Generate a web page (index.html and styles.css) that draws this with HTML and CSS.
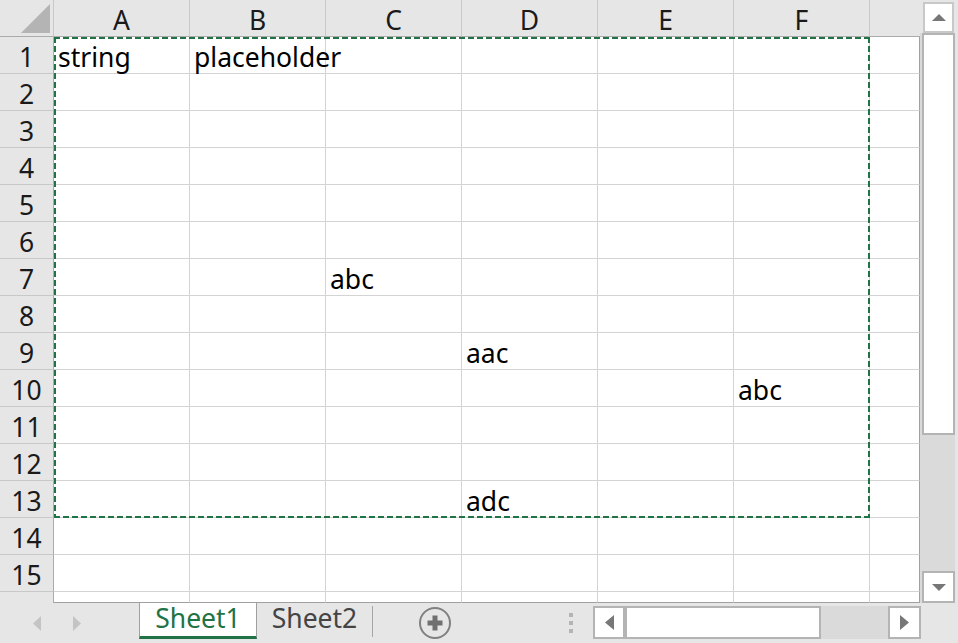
FILE: index.html
```html
<!DOCTYPE html>
<html>
<head>
<meta charset="utf-8">
<link rel="stylesheet" href="styles.css">
</head>
<body>
<div class="app">
  <div class="main">
    <div class="sheet">
      <div class="grid">
        <div class="c corner"><svg class="corner-tri" width="53" height="36" viewBox="0 0 53 36"><polygon points="21,33 50,33 50,4" fill="#b4b4b4"/></svg></div>
        <div class="c ch">A</div><div class="c ch">B</div><div class="c ch">C</div><div class="c ch">D</div><div class="c ch">E</div><div class="c ch">F</div><div class="c ch gh"></div>

        <div class="c rh">1</div><div class="c">string</div><div class="c">placeholder</div><div class="c"></div><div class="c"></div><div class="c"></div><div class="c"></div><div class="c g"></div>
        <div class="c rh">2</div><div class="c"></div><div class="c"></div><div class="c"></div><div class="c"></div><div class="c"></div><div class="c"></div><div class="c g"></div>
        <div class="c rh">3</div><div class="c"></div><div class="c"></div><div class="c"></div><div class="c"></div><div class="c"></div><div class="c"></div><div class="c g"></div>
        <div class="c rh">4</div><div class="c"></div><div class="c"></div><div class="c"></div><div class="c"></div><div class="c"></div><div class="c"></div><div class="c g"></div>
        <div class="c rh">5</div><div class="c"></div><div class="c"></div><div class="c"></div><div class="c"></div><div class="c"></div><div class="c"></div><div class="c g"></div>
        <div class="c rh">6</div><div class="c"></div><div class="c"></div><div class="c"></div><div class="c"></div><div class="c"></div><div class="c"></div><div class="c g"></div>
        <div class="c rh">7</div><div class="c"></div><div class="c"></div><div class="c">abc</div><div class="c"></div><div class="c"></div><div class="c"></div><div class="c g"></div>
        <div class="c rh">8</div><div class="c"></div><div class="c"></div><div class="c"></div><div class="c"></div><div class="c"></div><div class="c"></div><div class="c g"></div>
        <div class="c rh">9</div><div class="c"></div><div class="c"></div><div class="c"></div><div class="c">aac</div><div class="c"></div><div class="c"></div><div class="c g"></div>
        <div class="c rh">10</div><div class="c"></div><div class="c"></div><div class="c"></div><div class="c"></div><div class="c"></div><div class="c">abc</div><div class="c g"></div>
        <div class="c rh">11</div><div class="c"></div><div class="c"></div><div class="c"></div><div class="c"></div><div class="c"></div><div class="c"></div><div class="c g"></div>
        <div class="c rh">12</div><div class="c"></div><div class="c"></div><div class="c"></div><div class="c"></div><div class="c"></div><div class="c"></div><div class="c g"></div>
        <div class="c rh">13</div><div class="c"></div><div class="c"></div><div class="c"></div><div class="c">adc</div><div class="c"></div><div class="c"></div><div class="c g"></div>
        <div class="c rh">14</div><div class="c"></div><div class="c"></div><div class="c"></div><div class="c"></div><div class="c"></div><div class="c"></div><div class="c g"></div>
        <div class="c rh">15</div><div class="c"></div><div class="c"></div><div class="c"></div><div class="c"></div><div class="c"></div><div class="c"></div><div class="c g"></div>
        <div class="c rh last"></div><div class="c last"></div><div class="c last"></div><div class="c last"></div><div class="c last"></div><div class="c last"></div><div class="c last"></div><div class="c g last"></div>
      </div>
      <svg class="selection" width="920" height="603" viewBox="0 0 920 603">
        <g stroke="#217346" stroke-width="2" stroke-dasharray="6 3" fill="none">
          <line x1="54" y1="38" x2="870" y2="38"/>
          <line x1="54" y1="517" x2="870" y2="517"/>
          <line x1="55" y1="37" x2="55" y2="518"/>
          <line x1="869" y1="37" x2="869" y2="518"/>
        </g>
      </svg>
    </div>
    <div class="vscroll">
      <div class="vup"><svg width="14" height="7" viewBox="0 0 14 7"><polygon points="0,7 7,0 14,7" fill="#777"/></svg></div>
      <div class="vtrack">
        <div class="vthumb"></div>
        <div class="vdown"><svg width="14" height="7" viewBox="0 0 14 7"><polygon points="0,0 14,0 7,7" fill="#777"/></svg></div>
      </div>
    </div>
  </div>
  <div class="tabbar">
    <div class="nav">
      <svg width="8" height="15" viewBox="0 0 8 15"><polygon points="8,0 8,15 0,7.5" fill="#c4c4c4"/></svg>
      <svg width="8" height="15" viewBox="0 0 8 15"><polygon points="0,0 8,7.5 0,15" fill="#c4c4c4"/></svg>
    </div>
    <div class="tab active">Sheet1</div>
    <div class="tab">Sheet2</div>
    <div class="tsep"></div>
    <svg class="add" width="34" height="34" viewBox="0 0 34 34">
      <circle cx="17" cy="17" r="15" fill="none" stroke="#808080" stroke-width="2"/>
      <rect x="9.5" y="14.5" width="15" height="5" fill="#707070"/>
      <rect x="14.5" y="9.5" width="5" height="15" fill="#707070"/>
    </svg>
    <svg class="dots" width="4" height="20" viewBox="0 0 4 20">
      <rect x="0" y="0" width="4" height="4" fill="#b4b4b4"/>
      <rect x="0" y="8" width="4" height="4" fill="#b4b4b4"/>
      <rect x="0" y="16" width="4" height="4" fill="#b4b4b4"/>
    </svg>
    <div class="hscroll">
      <div class="hbtn hleft"><svg width="9" height="15" viewBox="0 0 9 15"><polygon points="9,0 9,15 0,7.5" fill="#777"/></svg></div>
      <div class="hthumb"></div>
      <div class="htrack"></div>
      <div class="hbtn hright"><svg width="9" height="15" viewBox="0 0 9 15"><polygon points="0,0 9,7.5 0,15" fill="#777"/></svg></div>
    </div>
  </div>
</div>
</body>
</html>
```

FILE: styles.css
```css
* { box-sizing: border-box; }
html, body { margin: 0; padding: 0; }
body {
  width: 958px;
  height: 643px;
  overflow: hidden;
  background: #e6e6e6;
  font-family: "Noto Sans", "Open Sans", "DejaVu Sans", sans-serif;
}
.app {
  display: flex;
  flex-direction: column;
  width: 958px;
  height: 643px;
}
.main {
  display: flex;
  height: 603px;
}
.sheet {
  position: relative;
  width: 920px;
  height: 603px;
  background: #fff;
  overflow: hidden;
}
.grid {
  display: grid;
  grid-template-columns: 54px repeat(6, 136px) 50px;
  grid-template-rows: repeat(16, 37px) 11px;
}
.c {
  display: flex;
  align-items: flex-end;
  border-right: 1px solid #d4d4d4;
  border-bottom: 1px solid #d4d4d4;
  padding: 0 0 3px 4px;
  font-size: 26.5px;
  line-height: 25px;
  white-space: nowrap;
  color: #000;
}
.ch {
  justify-content: center;
  padding: 0 0 3px 0;
  background: #e6e6e6;
  border-right-color: #c8c8c8;
  border-bottom-color: #ababab;
  color: #1a1a1a;
}
.gh { border-right: none; }
.rh {
  justify-content: center;
  padding: 0 0 3.5px 0;
  background: #e6e6e6;
  border-right-color: #ababab;
  border-bottom-color: #c8c8c8;
  color: #1a1a1a;
}
.corner {
  padding: 0;
  background: #e6e6e6;
  border-right-color: #c8c8c8;
  border-bottom-color: #ababab;
  align-items: stretch;
}
.corner-tri { display: block; }
.g { border-right-color: #a0a0a0; }
.last {
  padding: 0;
  border-bottom-color: #a0a0a0;
}
.rh.last { border-bottom: none; }
.selection {
  position: absolute;
  left: 0;
  top: 0;
  pointer-events: none;
}
.vscroll {
  width: 38px;
  height: 603px;
  background: #e6e6e6;
  display: flex;
  flex-direction: column;
}
.vup {
  margin: 2px 0 0 3px;
  width: 31px;
  height: 31px;
  border: 2px solid #c8c8c8;
  background: #fff;
  display: flex;
  align-items: center;
  justify-content: center;
}
.vtrack {
  flex: 1;
  width: 35px;
  background: #dadada;
  display: flex;
  flex-direction: column;
  padding-left: 2px;
}
.vthumb {
  width: 33px;
  height: 402px;
  border: 2px solid #b4b4b4;
  background: #fff;
}
.vdown {
  margin-top: auto;
  width: 33px;
  height: 32px;
  border: 2px solid #b4b4b4;
  background: #fff;
  display: flex;
  align-items: center;
  justify-content: center;
}
.tabbar {
  height: 40px;
  display: flex;
  align-items: flex-start;
  background: #e6e6e6;
}
.nav {
  width: 139px;
  height: 40px;
  display: flex;
  align-items: center;
  padding-left: 33px;
  gap: 32px;
}
.nav svg { display: block; }
.tab {
  width: 115px;
  height: 36px;
  padding-top: 3px;
  font-size: 26.5px;
  line-height: 25px;
  text-align: center;
  color: #444;
}
.tab.active {
  width: 118px;
  background: #fff;
  color: #217346;
  border-left: 1px solid #a0a0a0;
  border-right: 1px solid #a0a0a0;
  border-bottom: 3px solid #217346;
}
.tsep {
  width: 1px;
  height: 31px;
  margin-top: 3px;
  background: #a6a6a6;
}
.add {
  display: block;
  margin: 3px 0 0 45px;
}
.dots {
  display: block;
  margin: 10px 0 0 117px;
}
.hscroll {
  display: flex;
  margin: 3px 0 0 20px;
  height: 33px;
}
.hbtn {
  height: 33px;
  border: 2px solid #b4b4b4;
  background: #fff;
  display: flex;
  align-items: center;
  justify-content: center;
}
.hleft { width: 32px; }
.hright { width: 33px; }
.hthumb {
  width: 196px;
  height: 33px;
  border: 2px solid #b4b4b4;
  background: #fff;
}
.htrack {
  width: 67px;
  height: 33px;
  background: #dadada;
}
```
